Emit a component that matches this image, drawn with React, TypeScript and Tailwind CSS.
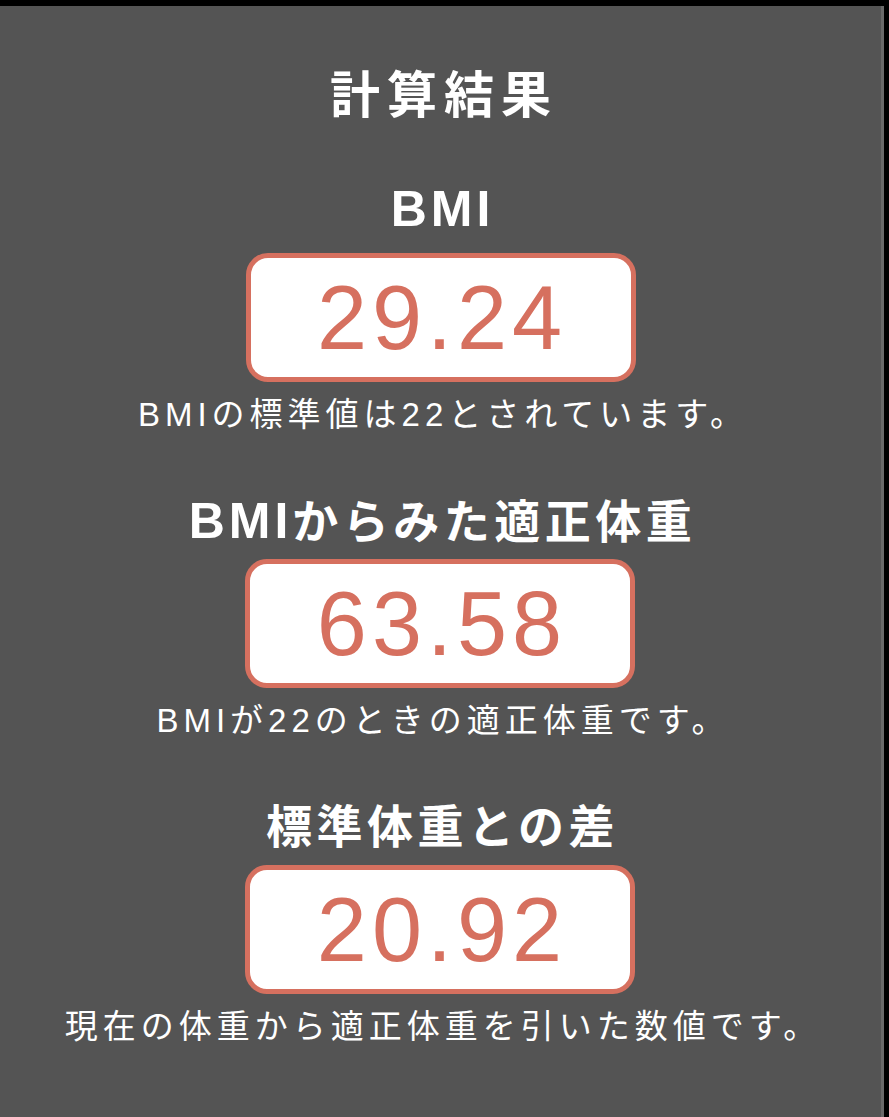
import React from "react";

const font = { fontFamily: '"Liberation Sans", "Noto Sans CJK JP", sans-serif' };

function Section({ title, value, desc, first }: { title: React.ReactNode; value: string; desc: string; first?: boolean }) {
  return (
    <div className={`flex flex-col items-center ${first ? "mt-[55px]" : "mt-[58px]"}`}>
      <h2 className="text-[46px] font-bold leading-[56px] h-[56px] whitespace-nowrap tracking-[4.5px] pl-[4px]">{title}</h2>
      <div className={`${first ? "mt-[16px]" : "mt-[10px]"} w-[390px] h-[129px] border-[5px] border-[#d6705f] bg-white rounded-[22px] flex items-center justify-center`}>
        <span className="text-[90px] leading-none text-[#d6705f] tracking-[5px] pl-[3px]">{value}</span>
      </div>
      <p className="mt-[13px] text-[33px] leading-[40px] h-[40px] whitespace-nowrap tracking-[5px] pl-[5px]">{desc}</p>
    </div>
  );
}

const Bmi = () => <span className="text-[50px] tracking-[4px]">BMI</span>;

export default function App() {
  return (
    <div className="w-[889px] h-[1117px] bg-black pt-[6px] pr-[5px]">
      <div
        className="h-[1111px] bg-[#545454] flex flex-col items-center text-white border-r-[3px] border-[#6a6a6a]"
        style={font}
      >
        <h1 className="mt-[60px] text-[50px] font-bold leading-[60px] h-[60px] tracking-[7px] pl-[7px]">計算結果</h1>
        <Section first title={<Bmi />} value="29.24" desc="BMIの標準値は22とされています。" />
        <Section title={<><Bmi />からみた適正体重</>} value="63.58" desc="BMIが22のときの適正体重です。" />
        <Section title="標準体重との差" value="20.92" desc="現在の体重から適正体重を引いた数値です。" />
      </div>
    </div>
  );
}
